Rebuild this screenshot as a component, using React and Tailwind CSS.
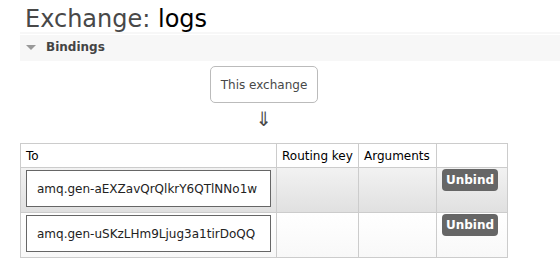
import React from 'react';

const bindings = [
    { dest: 'amq.gen-aEXZavQrQlkrY6QTlNNo1w', alt: true },
    { dest: 'amq.gen-uSKzLHm9Ljug3a1tirDoQQ', alt: false },
];

const App = () => {
    return (
        <div className="w-[560px] h-[266px] overflow-hidden bg-white text-[#484848]" style={{ fontFamily: '"DejaVu Sans", Verdana, sans-serif' }}>
            <h1 className="pl-[25px] pt-[7px] text-[24px] leading-[24px] text-[#484848]">
                Exchange: <span className="text-black">logs</span>
            </h1>
            <div className="ml-[20px] mt-[1px] h-[29px] bg-[#f7f7f7] flex flex-col">
                <div className="h-[2px]" />
                <div className="h-[1px] bg-white" />
                <div className="flex-1 flex items-center pl-[6px] gap-[10px] pb-[2px]">
                    <span className="w-0 h-0 border-l-[5px] border-r-[5px] border-t-[5px] border-l-transparent border-r-transparent border-t-[#999]" />
                    <span className="text-[12px] font-bold text-[#444]">Bindings</span>
                </div>
            </div>
            <div className="ml-[20px] mt-[5px] inline-flex flex-col items-center">
                <div className="border border-[#bbb] rounded-[5px] h-[37px] px-[10px] flex items-center text-[12px] text-[#484848]">
                    This exchange
                </div>
                <div className="text-[20px] leading-[22px] mt-[5px] text-[#484848]">⇓</div>
                <table className="mt-[13px] border-collapse text-[12px] text-black">
                    <thead>
                        <tr className="h-[24px]">
                            <th className="w-[256px] border border-[#ccc] font-normal text-left pl-[5px]">To</th>
                            <th className="w-[82px] border border-[#ccc] font-normal text-left pl-[5px]">Routing key</th>
                            <th className="w-[78px] border border-[#ccc] font-normal text-left pl-[5px]">Arguments</th>
                            <th className="w-[71px] border border-[#ccc]" />
                        </tr>
                    </thead>
                    <tbody>
                        {bindings.map((b) => (
                            <tr
                                key={b.dest}
                                className={`h-[45px] ${b.alt ? 'bg-gradient-to-b from-[#f2f2f2] to-[#e0e0e0]' : 'bg-gradient-to-b from-white to-[#f8f8f8]'}`}
                            >
                                <td className="border border-[#ccc] px-[5px] pt-[2px] pb-[5px] align-top">
                                    <div className="border border-[#666] bg-white h-[37px] flex items-center px-[10px] text-[12px] text-[#222]">
                                        {b.dest}
                                    </div>
                                </td>
                                <td className="border border-[#ccc]" />
                                <td className="border border-[#ccc]" />
                                <td className="border border-[#ccc] align-top pt-[1px] pl-[5px]">
                                    <button className="w-[56px] h-[22px] rounded-[4px] bg-[#666] text-white text-[12px] font-bold">
                                        Unbind
                                    </button>
                                </td>
                            </tr>
                        ))}
                    </tbody>
                </table>
            </div>
        </div>
    );
};

export default App;
